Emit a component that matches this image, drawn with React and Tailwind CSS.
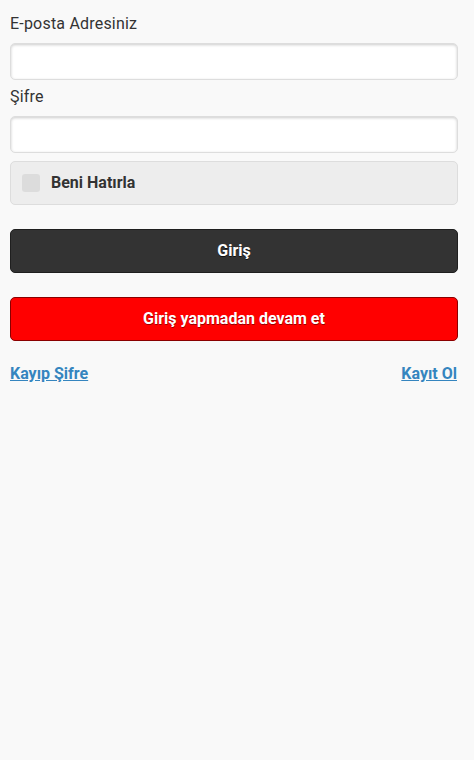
import React from "react";

export default function App() {
  return (
    <div className="min-h-[760px] bg-[#f9f9f9] font-['Roboto',sans-serif] text-[#333] pl-[10px] pr-[16px] pt-[13px]">
      <label className="block text-[16px] leading-[22px] tracking-[0.2px] mb-[8px]">E-posta Adresiniz</label>
      <div className="h-[37px] bg-white border border-[#dddddd] rounded-[5px] shadow-[inset_0_1px_3px_rgba(0,0,0,0.2)]"></div>
      <label className="block text-[16px] leading-[22px] tracking-[0.2px] mt-[6px] mb-[8px]">Şifre</label>
      <div className="h-[37px] bg-white border border-[#dddddd] rounded-[5px] shadow-[inset_0_1px_3px_rgba(0,0,0,0.2)]"></div>
      <div className="mt-[8px] h-[44px] flex items-center bg-[#ededed] border border-[#dddddd] rounded-[5px] pl-[11px]">
        <div className="w-[18px] h-[18px] rounded-[3px] bg-[#dcdcdc]"></div>
        <span className="ml-[11px] font-bold text-[16px] text-[#333] [text-shadow:0_1px_0_#f3f3f3]">Beni Hatırla</span>
      </div>
      <div className="mt-[24px] h-[44px] flex items-center justify-center bg-[#333333] border border-[#1f1f1f] rounded-[5px] text-white font-bold text-[16px] [text-shadow:0_1px_0_#111]">
        Giriş
      </div>
      <div className="mt-[24px] h-[44px] flex items-center justify-center bg-[#ff0000] border border-[#8a0000] rounded-[5px] text-white font-bold text-[16px] [text-shadow:0_1px_0_#900]">
        Giriş yapmadan devam et
      </div>
      <div className="mt-[22px] flex justify-between text-[16px] leading-[22px] font-bold pr-[1px]">
        <a className="text-[#3585bf] underline" href="#">Kayıp Şifre</a>
        <a className="text-[#3585bf] underline" href="#">Kayıt Ol</a>
      </div>
    </div>
  );
}
